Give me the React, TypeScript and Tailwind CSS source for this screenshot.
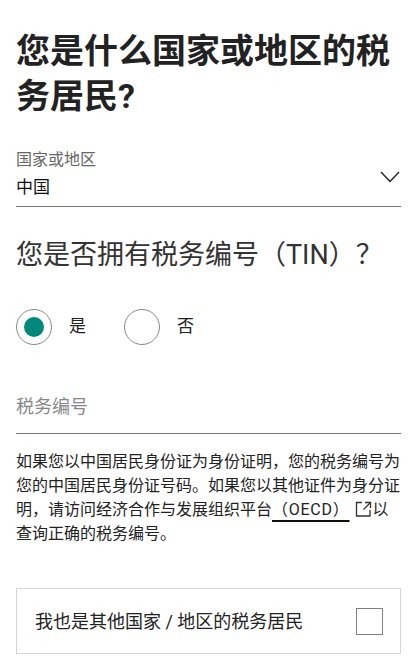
import React from "react";

export default function App() {
  return (
    <div
      className="w-[409px] h-[660px] overflow-hidden bg-white pl-4 pr-2 text-[#222]"
      style={{ fontFamily: "Roboto, 'Noto Sans CJK SC', sans-serif" }}
    >
      <h1 className="pt-[29px] text-[34px] leading-[45px] font-bold text-[#222]">
        您是什么国家或地区的税务居民?
      </h1>

      <div className="mt-[31px] border-b border-[#777] pb-[8px] flex items-end justify-between">
        <div className="flex flex-col">
          <span className="text-[16px] leading-[20px] text-[#666]">国家或地区</span>
          <span className="mt-[6px] text-[17px] leading-[22px] text-[#111]">中国</span>
        </div>
        <svg width="20" height="12" viewBox="0 0 20 12" className="mb-[15px] mr-[1px]">
          <path d="M1 1 L10 10.5 L19 1" fill="none" stroke="#222" strokeWidth="1.4" />
        </svg>
      </div>

      <h2 className="mt-[31px] text-[27px] leading-[34px] text-[#333]">
        您是否拥有税务编号（TIN）？
      </h2>

      <div className="mt-[37px] flex items-center">
        <div className="w-9 h-9 rounded-full border border-[#888] flex items-center justify-center">
          <div className="w-5 h-5 rounded-full bg-[#00897b]" />
        </div>
        <span className="ml-[17px] text-[17px] text-[#222]">是</span>
        <div className="ml-[38px] w-9 h-9 rounded-full border border-[#888]" />
        <span className="ml-[17px] text-[17px] text-[#222]">否</span>
      </div>

      <div className="mt-[50px] border-b border-[#777] pb-[14px]">
        <span className="block text-[18px] leading-[24px] text-[#888]">税务编号</span>
      </div>

      <p className="mt-[16px] text-[16px] leading-[24px] text-[#222]">
        如果您以中国居民身份证为身份证明，您的税务编号为您的中国居民身份证号码。如果您以其他证件为身分证明，请访问经济合作与发展组织平台
        <span className="underline decoration-2 underline-offset-[5px] decoration-[#111] tracking-[0.75px]">（OECD）</span>
        <svg width="17" height="16" viewBox="0 0 17 16" className="inline-block align-[-2px] ml-[5px] mr-[1px]">
          <path d="M7 1.5 H1.5 V15 H15 V9" fill="none" stroke="#333" strokeWidth="1.3" />
          <path d="M10 1.5 H15.5 V7" fill="none" stroke="#333" strokeWidth="1.3" />
          <path d="M15.5 1.5 L8.5 8.5" fill="none" stroke="#333" strokeWidth="1.3" />
        </svg>
        以<br />查询正确的税务编号。
      </p>

      <div className="mt-[42px] h-[66px] border border-[#d6d6d6] flex items-center justify-between pl-[18px] pr-[17px]">
        <span className="text-[18px] text-[#222]">我也是其他国家 / 地区的税务居民</span>
        <div className="w-[27px] h-[27px] border-[1.5px] border-[#808080]" />
      </div>
    </div>
  );
}
